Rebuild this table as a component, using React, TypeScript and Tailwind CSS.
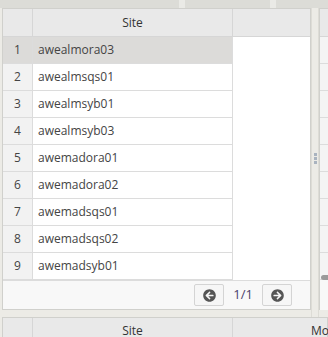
import { FaArrowCircleLeft, FaArrowCircleRight } from 'react-icons/fa'

const sites = [
  'awealmora03',
  'awealmsqs01',
  'awealmsyb01',
  'awealmsyb03',
  'awemadora01',
  'awemadora02',
  'awemadsqs01',
  'awemadsqs02',
  'awemadsyb01',
]

export default function App() {
  return (
    <div
      className="w-[328px] h-[337px] overflow-hidden bg-[#ecebe6] text-[12px] text-[#444]"
      style={{ fontFamily: '"Open Sans", "Liberation Sans", sans-serif' }}
    >
      {/* scroll strip of the grid above */}
      <div className="h-[8px] bg-[#dcdcd7] relative">
        <div className="absolute left-[179px] top-0 w-[6px] h-[8px] bg-[#eaeae6]" />
        <div className="absolute left-[270px] top-0 w-[6px] h-[8px] bg-[#eaeae6]" />
      </div>

      <div className="flex h-[309px]">
        {/* main grid */}
        <div className="ml-[2px] w-[309px] shrink-0 h-[302px] border border-[#d0d0cc] bg-white flex flex-col">
          <div className="flex h-[28px] bg-[#e9e9e9] border-b border-[#d6d6d6]">
            <div className="w-[30px] shrink-0 border-r border-[#d6d6d6]" />
            <div className="w-[200px] shrink-0 border-r border-[#d6d6d6] flex items-center justify-center text-[#333]">
              Site
            </div>
            <div className="flex-1" />
          </div>

          <div className="flex">
            <div className="w-[230px] shrink-0 border-r border-[#dcdcdc]">
              {sites.map((site, i) => (
                <div
                  key={site}
                  className={`flex h-[27px] border-b border-[#dcdcdc] ${i === 0 ? 'bg-[#dcdbd9]' : 'bg-white'}`}
                >
                  <div
                    className={`w-[30px] shrink-0 border-r border-[#dcdcdc] flex items-center justify-center ${i === 0 ? '' : 'bg-[#f2f2f2]'}`}
                  >
                    {i + 1}
                  </div>
                  <div className="flex-1 flex items-center pl-[5px]">{site}</div>
                </div>
              ))}
            </div>
            <div className="flex-1" />
          </div>

          {/* footer / pager */}
          <div className="flex-1 bg-[#f8f8f8] border-t border-[#dcdcdc] flex items-center justify-end pr-[18px] gap-[8px]">
            <button className="w-[30px] h-[22px] border border-[#d4d4d4] rounded-[2px] bg-[#f6f6f6] flex items-center justify-center text-[#555]">
              <FaArrowCircleLeft size={13} />
            </button>
            <span className="text-[#4a3f6b] text-[13px] px-[1px]">1/1</span>
            <button className="w-[30px] h-[22px] border border-[#d4d4d4] rounded-[2px] bg-[#f6f6f6] flex items-center justify-center text-[#555]">
              <FaArrowCircleRight size={13} />
            </button>
          </div>
        </div>

        {/* splitter */}
        <div className="w-[8px] shrink-0 h-full bg-[#ecebe6] border-x border-[#dddcd6] flex flex-col items-center pt-[145px] gap-[1px]">
          <div className="w-[3px] h-[3px] bg-[#a9b3bf]" />
          <div className="w-[3px] h-[3px] bg-[#a9b3bf]" />
          <div className="w-[3px] h-[3px] bg-[#a9b3bf]" />
        </div>

        {/* next grid, cut off */}
        <div className="flex-1 h-[302px] border-t border-l border-[#d0d0cc] bg-white flex flex-col">
          <div className="h-[28px] bg-[#e9e9e9] border-b border-[#d6d6d6]" />
          {sites.map((site) => (
            <div key={site} className="h-[27px] bg-[#f4f4f4] border-b border-[#dcdcdc]" />
          ))}
          <div className="relative flex-1 bg-[#f8f8f8]">
            <div className="absolute left-[1px] -top-[5px] w-[10px] h-[5px] rounded-full bg-[#9a9a9a]" />
          </div>
        </div>
      </div>

      {/* grid below */}
      <div className="ml-[2px] flex h-[28px] bg-[#e9e9e9] border border-[#d0d0cc]">
        <div className="w-[30px] shrink-0 border-r border-[#d6d6d6]" />
        <div className="w-[200px] shrink-0 border-r border-[#d6d6d6] flex items-center justify-center text-[#333]">
          Site
        </div>
        <div className="flex-1 flex items-center pl-[78px] text-[#333] whitespace-nowrap">Model</div>
      </div>
    </div>
  )
}
